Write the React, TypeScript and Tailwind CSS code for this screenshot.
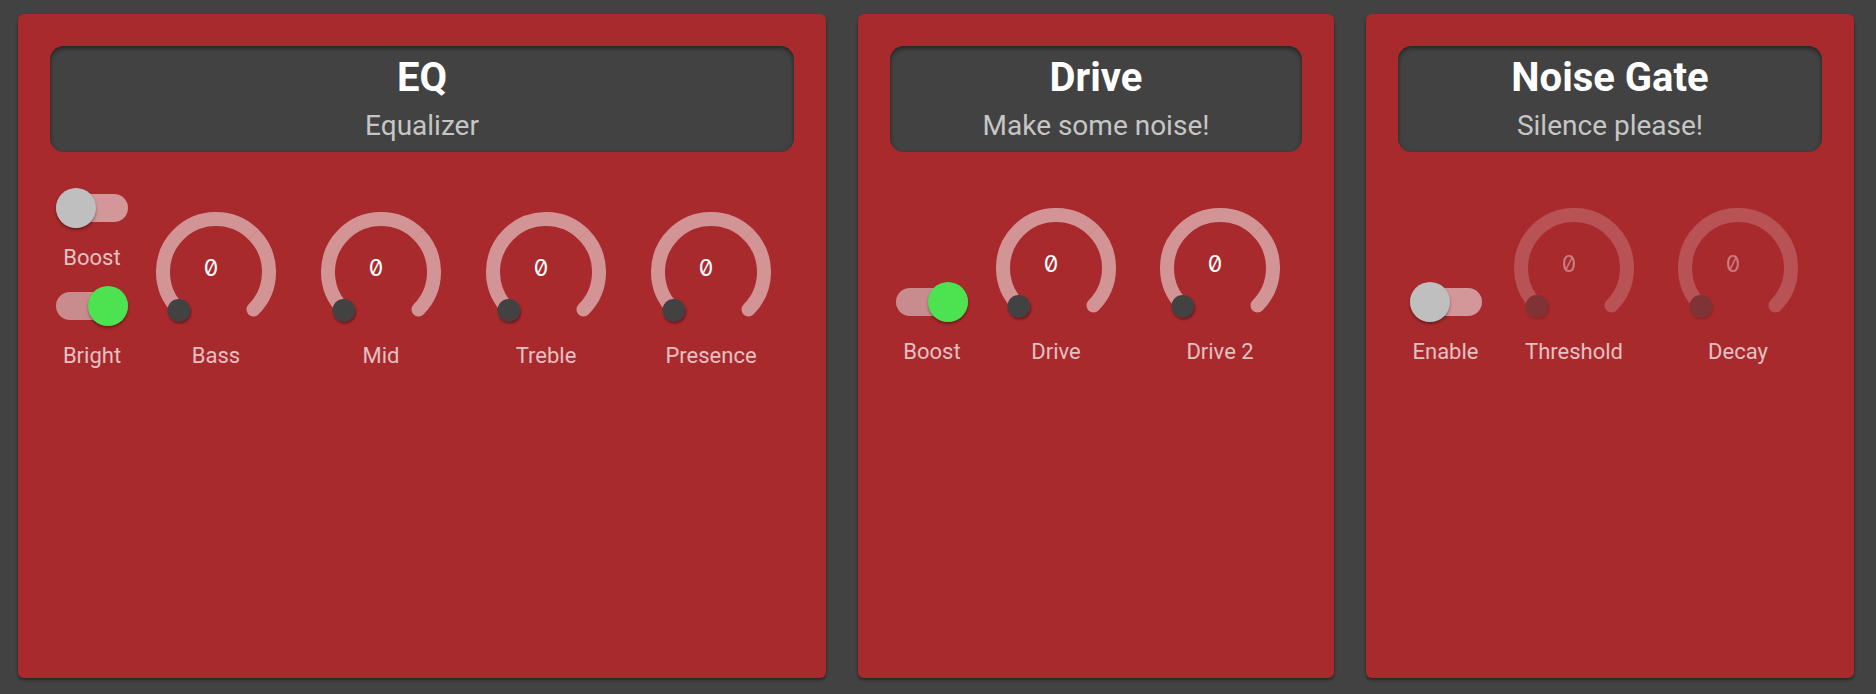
import React from "react";

type Ctl =
  | { kind: "switches"; width: string; items: { label: string; on: boolean }[] }
  | { kind: "knob"; width: string; label: string; disabled?: boolean };

type Pedal = {
  title: string;
  subtitle: string;
  width: string;
  rowTop: string;
  controls: Ctl[];
};

const pedals: Pedal[] = [
  {
    title: "EQ",
    subtitle: "Equalizer",
    width: "w-[808px]",
    rowTop: "mt-[36px]",
    controls: [
      { kind: "switches", width: "w-[84px]", items: [{ label: "Boost", on: false }, { label: "Bright", on: true }] },
      { kind: "knob", width: "w-[164px]", label: "Bass" },
      { kind: "knob", width: "w-[166px]", label: "Mid" },
      { kind: "knob", width: "w-[164px]", label: "Treble" },
      { kind: "knob", width: "w-[166px]", label: "Presence" },
    ],
  },
  {
    title: "Drive",
    subtitle: "Make some noise!",
    width: "w-[476px]",
    rowTop: "mt-[56px]",
    controls: [
      { kind: "switches", width: "w-[84px]", items: [{ label: "Boost", on: true }] },
      { kind: "knob", width: "w-[164px]", label: "Drive" },
      { kind: "knob", width: "w-[164px]", label: "Drive 2" },
    ],
  },
  {
    title: "Noise Gate",
    subtitle: "Silence please!",
    width: "w-[488px]",
    rowTop: "mt-[56px]",
    controls: [
      { kind: "switches", width: "w-[95px]", items: [{ label: "Enable", on: false }] },
      { kind: "knob", width: "w-[162px]", label: "Threshold", disabled: true },
      { kind: "knob", width: "w-[166px]", label: "Decay", disabled: true },
    ],
  },
];

const labelCls = "text-[22px] leading-[28px] text-[#e6c0c1] whitespace-nowrap";

function Toggle({ label, on }: { label: string; on: boolean }) {
  return (
    <div className="flex flex-col items-center">
      <div className="relative w-[72px] h-[40px] flex items-center">
        <div className={on ? "w-[72px] h-[28px] rounded-full bg-[#c98c8e]" : "w-[72px] h-[28px] rounded-full bg-[#d49799]"} />
        <div
          className={
            on
              ? "absolute top-0 right-0 w-[40px] h-[40px] rounded-full bg-[#4de350] shadow-[0_2px_3px_rgba(0,0,0,0.35)]"
              : "absolute top-0 left-0 w-[40px] h-[40px] rounded-full bg-[#bfbfbf] shadow-[0_2px_3px_rgba(0,0,0,0.35)]"
          }
        />
      </div>
      <span className={"mt-4 " + labelCls}>{label}</span>
    </div>
  );
}

function Knob({ label, disabled }: { label: string; disabled?: boolean }) {
  return (
    <div className="flex flex-col items-center">
      <svg width="120" height="120" viewBox="0 0 120 120" className={disabled ? "opacity-[0.38]" : ""}>
        <defs>
          <filter id="dotShadow" x="-50%" y="-50%" width="200%" height="200%">
            <feDropShadow dx="1" dy="2" stdDeviation="1.2" floodColor="#000" floodOpacity="0.4" />
          </filter>
        </defs>
        <path d="M 22.52 97.48 A 53 53 0 0 1 97.48 22.52" fill="none" stroke="#d39496" strokeWidth="14" />
        <path d="M 97.48 22.52 A 53 53 0 0 1 97.48 97.48" fill="none" stroke="#d39496" strokeWidth="14" strokeLinecap="round" />
        <line x1="92.6" y1="27.4" x2="102.4" y2="17.6" stroke="#c9855f" strokeWidth="0.7" />
        <circle cx="22.8" cy="98.2" r="11.3" fill="#424242" filter="url(#dotShadow)" />
        <text
          x="55"
          y="56"
          textAnchor="middle"
          dominantBaseline="central"
          className="slashed-zero"
          fontFamily="Inter, 'DejaVu Sans Mono', monospace"
          fontSize="23"
          fill="#ffffff"
        >
          0
        </text>
      </svg>
      <span className={"mt-[10px] " + labelCls}>{label}</span>
    </div>
  );
}

function PedalCard({ p }: { p: Pedal }) {
  return (
    <div className={p.width + " h-[664px] shrink-0 rounded-[6px] bg-[#a82a2d] p-8 shadow-[0_2px_3px_rgba(0,0,0,0.45)]"}>
      <div className="h-[106px] rounded-[14px] bg-[#424242] pt-[8px] text-center shadow-[inset_0_2px_4px_rgba(0,0,0,0.5)]">
        <div className="text-[40px] leading-[48px] font-bold text-white">{p.title}</div>
        <div className="mt-[3px] text-[28px] leading-[42px] text-[#c6c6c6]">{p.subtitle}</div>
      </div>
      <div className={"flex items-end " + p.rowTop}>
        {p.controls.map((c, i) => (
          <div key={i} className={c.width + " flex flex-col items-center"}>
            {c.kind === "switches" ? (
              <div className="flex flex-col items-center gap-[14px]">
                {c.items.map((s) => (
                  <Toggle key={s.label} label={s.label} on={s.on} />
                ))}
              </div>
            ) : (
              <Knob label={c.label} disabled={c.disabled} />
            )}
          </div>
        ))}
      </div>
    </div>
  );
}

export default function App() {
  return (
    <div className="w-[1876px] h-[694px] bg-[#424242] flex gap-8 pl-[18px] pt-[14px] font-['Roboto',sans-serif] overflow-hidden">
      {pedals.map((p) => (
        <PedalCard key={p.title} p={p} />
      ))}
    </div>
  );
}
